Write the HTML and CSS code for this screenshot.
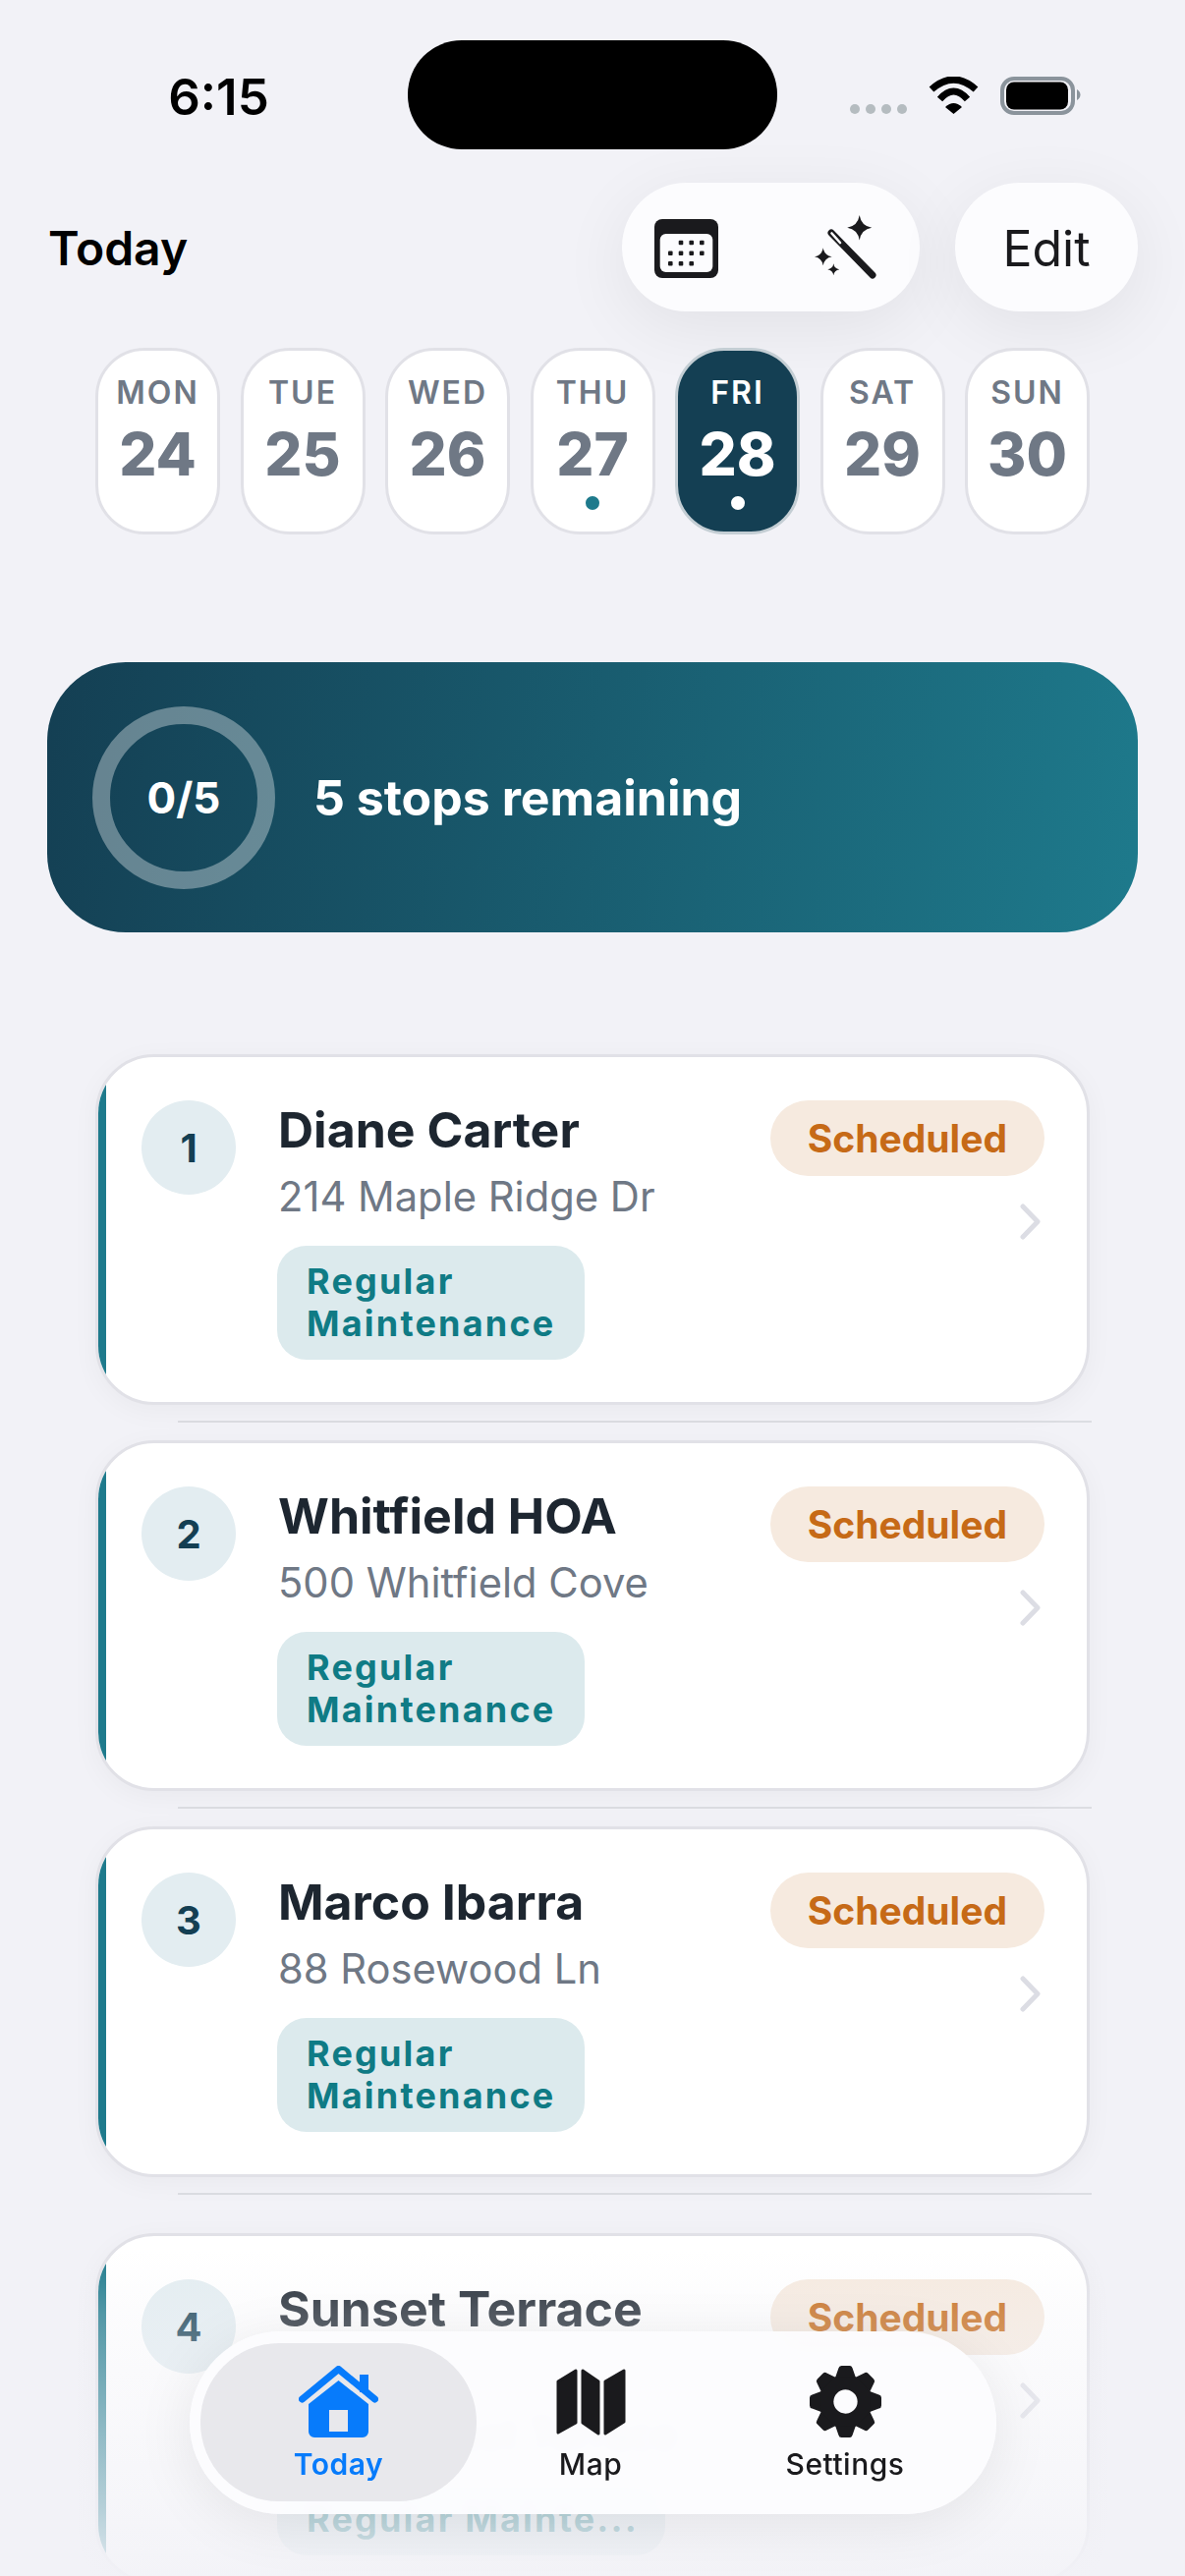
FILE: index.html
```html
<!DOCTYPE html>
<html lang="en">
<head>
<meta charset="utf-8">
<title>Today</title>
<link rel="stylesheet" href="styles.css">
</head>
<body>
<div class="page">
  <div class="status">
    <div class="status-left"><span class="time">6:15</span></div>
    <div class="island"></div>
    <div class="status-right">
      <div class="signal"><i></i><i></i><i></i><i></i></div>
      <svg class="wifi" viewBox="0 0 51 38"><path d="M3 13Q25.5-7 48 13" fill="none" stroke="#000" stroke-width="7"/><path d="M11.5 23Q25.5 7 39.5 23" fill="none" stroke="#000" stroke-width="7"/><path d="M17 31Q25.5 23 34 31L25.5 38Z" fill="#000"/></svg>
      <svg class="battery" viewBox="0 0 82 39"><rect x="2" y="2" width="72" height="35" rx="12" fill="none" stroke="#8b949c" stroke-width="4"/><rect x="6" y="5.5" width="63" height="28" rx="8" fill="#000"/><path d="M78 13c2 1 3.500 3 3.500 5.500S80 23 78 24Z" fill="#8b949c"/></svg>
    </div>
  </div>

  <header class="header">
    <h1 class="title">Today</h1>
    <div class="header-actions">
      <div class="glass-pill">
        <svg class="ico-cal" viewBox="0 0 65 60"><rect width="65" height="60" rx="8" fill="#1a1a1d"/><rect x="5.700" y="15" width="53.600" height="39" rx="6" fill="#fcfcfe"/><g fill="#1a1a1d"><rect x="24.700" y="21.700" width="4.600" height="4.600" rx="1"/><rect x="35.400" y="21.700" width="4.600" height="4.600" rx="1"/><rect x="46" y="21.700" width="4.600" height="4.600" rx="1"/><rect x="14" y="32.400" width="4.600" height="4.600" rx="1"/><rect x="24.700" y="32.400" width="4.600" height="4.600" rx="1"/><rect x="35.400" y="32.400" width="4.600" height="4.600" rx="1"/><rect x="46" y="32.400" width="4.600" height="4.600" rx="1"/><rect x="14" y="43" width="4.600" height="4.600" rx="1"/><rect x="24.700" y="43" width="4.600" height="4.600" rx="1"/><rect x="35.400" y="43" width="4.600" height="4.600" rx="1"/></g></svg>
        <svg class="ico-wand" viewBox="0 0 63 65"><path d="M17 18 59 61" stroke="#1a1a1d" stroke-width="7" stroke-linecap="round"/><path d="M17.500 18.500 26 28" stroke="#fcfcfe" stroke-width="2.600" stroke-linecap="round"/><path fill="#1a1a1d" d="M45.700 0Q47.500 11 58.200 12.700 47.500 14.500 45.700 25.400 44 14.500 33.200 12.700 44 11 45.700 0ZM8.700 33.300Q10 41 17.700 42.300 10 43.600 8.700 51.300 7.400 43.600 0 42.300 7.400 41 8.700 33.300ZM19.300 49.300Q20 54.500 25.300 55.300 20 56.100 19.300 61.300 18.600 56.100 13.300 55.300 18.600 54.500 19.300 49.300Z"/></svg>
      </div>
      <div class="glass-pill glass-pill--text">Edit</div>
    </div>
  </header>

  <div class="week">
    <div class="day"><span class="day-name">MON</span><span class="day-num">24</span><i class="day-dot"></i></div>
    <div class="day"><span class="day-name">TUE</span><span class="day-num">25</span><i class="day-dot"></i></div>
    <div class="day"><span class="day-name">WED</span><span class="day-num">26</span><i class="day-dot"></i></div>
    <div class="day day--marked"><span class="day-name">THU</span><span class="day-num">27</span><i class="day-dot"></i></div>
    <div class="day day--active"><span class="day-name">FRI</span><span class="day-num">28</span><i class="day-dot"></i></div>
    <div class="day"><span class="day-name">SAT</span><span class="day-num">29</span><i class="day-dot"></i></div>
    <div class="day"><span class="day-name">SUN</span><span class="day-num">30</span><i class="day-dot"></i></div>
  </div>

  <section class="hero">
    <div class="ring">0/5</div>
    <div class="hero-text">5 stops remaining</div>
  </section>

  <main class="list">
    <article class="card">
      <div class="badge">1</div>
      <div class="card-body">
        <div class="name">Diane Carter</div>
        <div class="addr">214 Maple Ridge Dr</div>
        <div class="tag">Regular Maintenance</div>
      </div>
      <div class="card-side">
        <span class="state">Scheduled</span>
        <svg class="chev" viewBox="0 0 21 37"><path d="M3 3 18 18.500 3 34" fill="none" stroke="#dcdde4" stroke-width="5" stroke-linecap="round" stroke-linejoin="round"/></svg>
      </div>
    </article>
    <div class="sep"></div>
    <article class="card">
      <div class="badge">2</div>
      <div class="card-body">
        <div class="name">Whitfield HOA</div>
        <div class="addr">500 Whitfield Cove</div>
        <div class="tag">Regular Maintenance</div>
      </div>
      <div class="card-side">
        <span class="state">Scheduled</span>
        <svg class="chev" viewBox="0 0 21 37"><path d="M3 3 18 18.500 3 34" fill="none" stroke="#dcdde4" stroke-width="5" stroke-linecap="round" stroke-linejoin="round"/></svg>
      </div>
    </article>
    <div class="sep"></div>
    <article class="card">
      <div class="badge">3</div>
      <div class="card-body">
        <div class="name">Marco Ibarra</div>
        <div class="addr">88 Rosewood Ln</div>
        <div class="tag">Regular Maintenance</div>
      </div>
      <div class="card-side">
        <span class="state">Scheduled</span>
        <svg class="chev" viewBox="0 0 21 37"><path d="M3 3 18 18.500 3 34" fill="none" stroke="#dcdde4" stroke-width="5" stroke-linecap="round" stroke-linejoin="round"/></svg>
      </div>
    </article>
    <div class="sep sep--last"></div>
    <article class="card">
      <div class="badge">4</div>
      <div class="card-body">
        <div class="name">Sunset Terrace HOA</div>
        <div class="addr">1200 Sunset Terrace</div>
        <div class="tag tag--line">Regular Mainte...</div>
      </div>
      <div class="card-side">
        <span class="state">Scheduled</span>
        <svg class="chev" viewBox="0 0 21 37"><path d="M3 3 18 18.500 3 34" fill="none" stroke="#dcdde4" stroke-width="5" stroke-linecap="round" stroke-linejoin="round"/></svg>
      </div>
    </article>
  </main>

  <div class="fade"></div>

  <nav class="tabbar">
    <div class="tab tab--active">
      <svg class="tab-ico" viewBox="0 0 81 73"><path d="M62 9h9v18h-9z" fill="#077bfb"/><path d="M3.500 34 40.500 3.500 77.500 34" fill="none" stroke="#077bfb" stroke-width="7" stroke-linecap="round" stroke-linejoin="round"/><path fill="#077bfb" fill-rule="evenodd" d="M40.500 15 71 39V67a6 6 0 0 1-6 6H16a6 6 0 0 1-6-6V39ZM31 45V67H50V45Z"/></svg>
      <span class="tab-label">Today</span>
    </div>
    <div class="tab">
      <svg class="tab-ico" viewBox="0 0 71 73"><g fill="#1a1a1d" stroke="#1a1a1d" stroke-width="3" stroke-linejoin="round"><path d="M20 5V58L2 68V16Z"/><path d="M27 5 43 16V69L27 58Z"/><path d="M50 16 69 5V57L50 69Z"/></g></svg>
      <span class="tab-label">Map</span>
    </div>
    <div class="tab">
      <svg class="tab-ico" viewBox="-36 -36 72 72"><g fill="#1a1a1d"><circle r="27"/><path id="gear-tooth" d="M-10-25-7-33.500Q-6.500-36-4-36H4Q6.500-36 7-33.500L10-25Z"/><use href="#gear-tooth" transform="rotate(45)"/><use href="#gear-tooth" transform="rotate(90)"/><use href="#gear-tooth" transform="rotate(135)"/><use href="#gear-tooth" transform="rotate(180)"/><use href="#gear-tooth" transform="rotate(225)"/><use href="#gear-tooth" transform="rotate(270)"/><use href="#gear-tooth" transform="rotate(315)"/></g><circle r="12" fill="#fcfcfe"/></svg>
      <span class="tab-label">Settings</span>
    </div>
  </nav>
</div>
</body>
</html>
```

FILE: styles.css
```css
* { box-sizing: border-box; }
html, body { margin: 0; padding: 0; }
body { background: #f2f2f7; font-family: Inter, "Liberation Sans", sans-serif; }

.page {
  position: relative;
  width: 1206px;
  height: 2622px;
  overflow: hidden;
  background: #f2f2f7;
}

/* status bar */
.status { display: flex; height: 186px; padding-top: 41px; }
.status-left { width: 415px; height: 111px; display: flex; align-items: center; justify-content: center; padding-left: 30px; padding-top: 4px; }
.time { font-size: 51px; font-weight: 600; line-height: 60px; color: #000; }
.island { width: 376px; height: 111px; border-radius: 55px; background: #000; }
.status-right { flex: 1; display: flex; align-items: flex-start; padding: 37px 0 0 74px; }
.signal { display: flex; gap: 6px; margin-top: 28px; }
.signal i { width: 10px; height: 10px; border-radius: 50%; background: #b5bcc0; }
.wifi { width: 51px; height: 38px; margin-left: 22px; }
.battery { width: 82px; height: 39px; margin-left: 22px; }

/* header */
.header { display: flex; align-items: center; height: 131px; padding: 0 48px 0 49px; }
.title { margin: 2px 0 0; font-size: 48px; font-weight: 600; line-height: 60px; color: #000; }
.header-actions { display: flex; gap: 36px; margin-left: auto; }
.glass-pill {
  display: flex;
  align-items: center;
  justify-content: space-between;
  width: 303px;
  height: 131px;
  padding: 0 44px 0 33px;
  border-radius: 66px;
  background: #fcfcfe;
  box-shadow: 0 16px 70px rgba(0, 0, 0, 0.07);
}
.glass-pill--text {
  width: 186px;
  padding: 2px 0 0;
  justify-content: center;
  font-size: 50px;
  font-weight: 400;
  color: #1a1a1d;
}
.ico-cal { width: 65px; height: 60px; margin-top: 3px; }
.ico-wand { width: 63px; height: 65px; }

/* week */
.week { display: flex; gap: 20.5px; margin-top: 37px; padding: 0 97px; }
.day {
  flex: 0 0 127px;
  height: 190px;
  display: flex;
  flex-direction: column;
  align-items: center;
  padding-top: 24px;
  border: 3px solid #e1e1e7;
  border-radius: 50px;
  background: #fff;
}
.day-name { font-size: 32px; font-weight: 600; line-height: 38px; letter-spacing: 2px; color: #6f7885; }
.day-num { margin-top: 13px; font-size: 60px; font-weight: 800; line-height: 60px; color: #6f7885; }
.day-dot { width: 14px; height: 14px; margin-top: 13px; border-radius: 50%; }
.day--marked .day-dot { background: #1e7a8c; }
.day--active { background: #143f53; border-color: #c4ced4; }
.day--active .day-name, .day--active .day-num { color: #fff; }
.day--active .day-dot { background: #fff; }

/* hero */
.hero {
  display: flex;
  align-items: center;
  gap: 39px;
  height: 275px;
  margin: 130px 48px 0;
  padding-left: 46px;
  border-radius: 80px;
  background: linear-gradient(100deg, #143f53 0%, #1e7a8c 100%);
}
.ring {
  display: flex;
  align-items: center;
  justify-content: center;
  width: 186px;
  height: 186px;
  border: 18px solid rgba(255, 255, 255, 0.35);
  border-radius: 50%;
  font-size: 44px;
  font-weight: 700;
  color: #fff;
}
.hero-text { font-size: 50px; font-weight: 700; color: #fff; }

/* list */
.list { margin: 124px 97px 0 97px; }
.card {
  position: relative;
  display: flex;
  height: 357px;
  padding: 44px 43px 0 44px;
  overflow: hidden;
  border: 3px solid #e1e1e7;
  border-radius: 60px;
  background: #fff;
  box-shadow: 0 6px 28px rgba(0, 0, 0, 0.04);
}
.card::before {
  content: "";
  position: absolute;
  left: 0;
  top: 0;
  bottom: 0;
  width: 8px;
  background: #1e7a8c;
}
.badge {
  flex: 0 0 96px;
  display: flex;
  align-items: center;
  justify-content: center;
  height: 96px;
  border-radius: 50%;
  background: #e3edf1;
  font-size: 40px;
  font-weight: 700;
  color: #143f53;
}
.card-body { width: 440px; margin-left: 43px; }
.name { font-size: 50px; font-weight: 700; line-height: 60px; color: #1d2630; }
.addr { margin-top: 13px; font-size: 41.700px; line-height: 50px; color: #6f7885; white-space: nowrap; }
.tag {
  width: 313px;
  margin: 25px 0 0 -1px;
  padding: 15px 30px;
  border-radius: 30px;
  background: #dceaed;
  font-size: 36px;
  font-weight: 700;
  line-height: 43px;
  letter-spacing: 2.200px;
  color: #0f7b85;
}
.tag--line { width: 395px; white-space: nowrap; }
.card-side { margin-left: auto; display: flex; flex-direction: column; align-items: flex-end; }
.state {
  display: flex;
  align-items: center;
  height: 77px;
  padding: 0 38px;
  border-radius: 39px;
  background: #f6eadf;
  font-size: 39px;
  font-weight: 700;
  color: #c66a17;
}
.chev { width: 21px; height: 37px; margin: 28px 4px 0 0; }
.sep { height: 2px; margin: 16px -2px 18px 84px; background: #dcdde2; }
.sep--last { margin-bottom: 39px; }

/* overlays */
.fade {
  position: absolute;
  left: 0;
  right: 0;
  top: 2290px;
  bottom: 0;
  background: linear-gradient(to bottom, rgba(242, 242, 247, 0) 0%, rgba(242, 242, 247, 0.25) 20%, rgba(242, 242, 247, 0.72) 80%, rgba(242, 242, 247, 0.92) 100%);
}
.tabbar {
  position: absolute;
  left: 193px;
  top: 2373px;
  display: grid;
  grid-template-columns: 281px 232px 286px;
  width: 821px;
  height: 186px;
  padding: 12px 11px;
  border-radius: 93px;
  background: rgba(252, 252, 254, 0.95);
  backdrop-filter: blur(6px);
  box-shadow: 0 10px 60px rgba(0, 0, 0, 0.08);
}
.tab { display: flex; flex-direction: column; align-items: center; height: 161px; padding-top: 23px; border-radius: 80px; color: #1a1a1d; }
.tab--active { background: rgba(230, 230, 234, 0.9); color: #077bfb; }
.tab-ico { height: 73px; }
.tab-label { margin-top: 9px; font-size: 30px; font-weight: 500; line-height: 36px; letter-spacing: 0.500px; }
.tab--active .tab-label { font-weight: 600; }
```
